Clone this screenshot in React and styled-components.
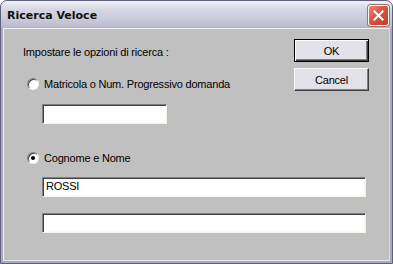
import React from 'react';
import styled, { createGlobalStyle } from 'styled-components';

const GlobalStyle = createGlobalStyle`
  html, body {
    margin: 0;
    padding: 0;
    background: #ffffff;
  }
  * {
    box-sizing: border-box;
  }
`;

const Window = styled.div`
  width: 393px;
  height: 264px;
  display: flex;
  flex-direction: column;
  border: 1px solid #5f5f7c;
  border-radius: 7px 7px 0 0;
  background: #a9a9bf;
  overflow: hidden;
  font-family: "Liberation Sans", Arial, sans-serif;
`;

const TitleBar = styled.div`
  height: 27px;
  flex: none;
  display: flex;
  align-items: center;
  justify-content: space-between;
  padding: 0 3px 0 6px;
  background: linear-gradient(
    to bottom,
    #f0f0f6 0%,
    #d8d8e4 30%,
    #cacad8 65%,
    #bfbfd0 90%,
    #b2b2c6 100%
  );
`;

const Title = styled.span`
  font-family: "DejaVu Sans", "Liberation Sans", sans-serif;
  font-weight: bold;
  font-size: 11px;
  color: #111;
  margin-top: 2px;
`;

const CloseButton = styled.div`
  width: 21px;
  height: 21px;
  margin-top: 2px;
  border: 1px solid #ffffff;
  border-radius: 3px;
  background: linear-gradient(135deg, #ec8a76 0%, #d9553f 45%, #c23a28 100%);
  box-shadow: 0 0 0 1px #a07070;
  display: flex;
  align-items: center;
  justify-content: center;
`;

const Frame = styled.div`
  flex: 1;
  margin: 0 2px 2px 2px;
  border-top: 1px solid #f0f0f4;
  border-left: 1px solid #f0f0f4;
  border-right: 1px solid #d8d8e0;
  border-bottom: 1px solid #e8e8ee;
  background: #c0c0c0;
  display: grid;
  grid-template-columns: 1fr 75px;
  grid-template-areas:
    "options buttons"
    "wide wide";
  align-content: start;
  padding: 10px 20px 0 19px;
  font-size: 11px;
  letter-spacing: -0.2px;
  color: #000;
`;

const Options = styled.div`
  grid-area: options;
  display: flex;
  flex-direction: column;
  align-items: flex-start;
`;

const Buttons = styled.div`
  grid-area: buttons;
  display: flex;
  flex-direction: column;
  gap: 6px;
`;

const Wide = styled.div`
  grid-area: wide;
  display: flex;
  flex-direction: column;
  gap: 16px;
  padding: 12px 3px 0 19px;
`;

const Label = styled.div`
  height: 14px;
  line-height: 14px;
  margin-top: ${(p) => p.$top || 0}px;
  white-space: nowrap;
`;

const RadioRow = styled.div`
  display: flex;
  align-items: center;
  height: 14px;
  margin-top: ${(p) => p.$top}px;
  padding-left: 4px;
  gap: 5px;
  white-space: nowrap;
`;

const RadioCircle = styled.span`
  width: 12px;
  height: 12px;
  border-radius: 50%;
  background: #ffffff;
  border: 1px solid;
  border-color: #808080 #f4f4f4 #f4f4f4 #808080;
  box-shadow: inset 1px 1px 0 #404040;
  display: flex;
  align-items: center;
  justify-content: center;

  &::after {
    content: '';
    width: 4px;
    height: 4px;
    border-radius: 50%;
    background: ${(p) => (p.$checked ? '#000' : 'transparent')};
  }
`;

const TextBox = styled.div`
  height: 20px;
  width: ${(p) => (p.$width ? `${p.$width}px` : '100%')};
  margin-top: ${(p) => p.$top || 0}px;
  margin-left: ${(p) => p.$indent || 0}px;
  background: #ffffff;
  border: 1px solid;
  border-color: #808080 #f6f4ea #f6f4ea #808080;
  box-shadow: inset 1px 1px 0 #404040, inset -1px -1px 0 #fdfcf3;
  padding: 0 3px;
  line-height: 17px;
  font-size: 11px;
`;

const Button = styled.div`
  height: 23px;
  display: flex;
  align-items: center;
  justify-content: center;
  background: #e2e2e8;
  border: 1px solid;
  border-color: ${(p) => (p.$default ? '#000' : '#f8f8f8 #404040 #404040 #f8f8f8')};
  box-shadow: ${(p) =>
    p.$default
      ? 'inset 1px 1px 0 #ffffff, inset -1px -1px 0 #404040, inset -2px -2px 0 #808080'
      : 'inset -1px -1px 0 #808080'};
  font-size: 11px;
`;

export default function App() {
  return (
    <>
      <GlobalStyle />
      <Window>
        <TitleBar>
          <Title>Ricerca Veloce</Title>
          <CloseButton>
            <svg width="11" height="11" viewBox="0 0 11 11">
              <path d="M1.5 1.5 L9.5 9.5 M9.5 1.5 L1.5 9.5" stroke="#ffffff" strokeWidth="2" strokeLinecap="square" />
            </svg>
          </CloseButton>
        </TitleBar>
        <Frame>
          <Options>
            <Label $top={6}>Impostare le opzioni di ricerca :</Label>
            <RadioRow $top={18}>
              <RadioCircle />
              <span>Matricola o Num. Progressivo domanda</span>
            </RadioRow>
            <TextBox $top={13} $indent={19} $width={125} />
            <RadioRow $top={27}>
              <RadioCircle $checked />
              <span>Cognome e Nome</span>
            </RadioRow>
          </Options>
          <Buttons>
            <Button $default>OK</Button>
            <Button>Cancel</Button>
          </Buttons>
          <Wide>
            <TextBox>ROSSI</TextBox>
            <TextBox />
          </Wide>
        </Frame>
      </Window>
    </>
  );
}
